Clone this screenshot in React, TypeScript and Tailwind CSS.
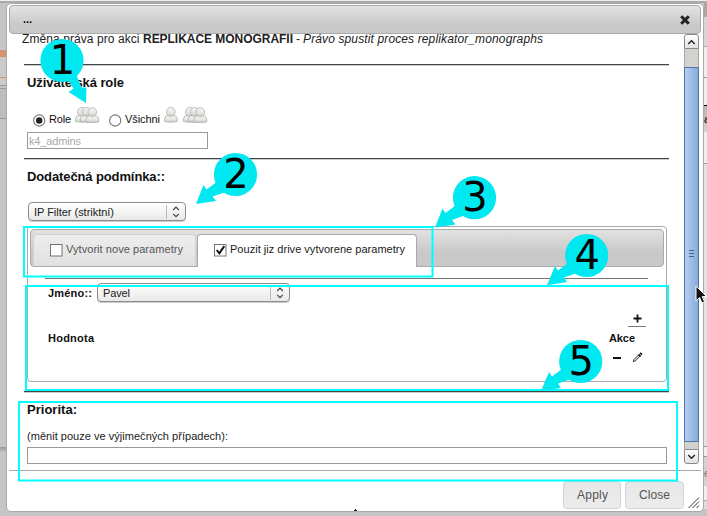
import React from "react";

function Strut({ h, c = "" }: { h: string; c?: string }) {
  return <div className={`${h} shrink-0 ${c}`} />;
}

function Rule() {
  return <div className="ml-[15px] h-[2px] w-[645px] shrink-0 border-t border-[#444] bg-[#ccc]" />;
}

function T({ w, children, className = "", size = 11, bold = false, italic = false }: any) {
  return (
    <svg width={w} height="16" className={`block shrink-0 overflow-visible ${className}`}>
      <text x="0" y="12" textLength={w} fill="currentColor" fontSize={size} fontWeight={bold ? 700 : 400} fontStyle={italic ? "italic" : "normal"}>
        {children}
      </text>
    </svg>
  );
}

function Person({ x, y = 0 }: { x: number; y?: number }) {
  return (
    <g transform={`translate(${x} ${y})`} stroke="#b0b0ac" strokeWidth="0.8">
      <path d="M.5 14.6 V11.5 Q.7 8.8 4.3 8.2 H9.3 Q12.8 8.8 13.2 11.5 V14.6 Q7 15.8 .5 14.6Z" fill="url(#person)" />
      <ellipse cx="6.8" cy="4.8" rx="4.3" ry="4.4" fill="url(#person)" />
    </g>
  );
}

function PersonShade() {
  return (
    <defs>
      <linearGradient id="person" x1="0" y1="0" x2="0" y2="1">
        <stop offset="0" stopColor="#f4f4f2" />
        <stop offset="0.6" stopColor="#e6e6e3" />
        <stop offset="1" stopColor="#c9c9c5" />
      </linearGradient>
    </defs>
  );
}

function Group({ className = "" }: { className?: string }) {
  return (
    <svg width="25" height="16" className={`shrink-0 ${className}`}>
      <PersonShade />
      <Person x={0} />
      <Person x={5} />
      <Person x={10.5} y={0.3} />
    </svg>
  );
}

function Radio({ checked = false }: { checked?: boolean }) {
  return (
    <svg width="13" height="13" className="shrink-0">
      <circle cx="6.2" cy="6.5" r="5.6" fill="#fff" stroke="#777" strokeWidth="1.1" />
      {checked && <circle cx="6.2" cy="6.5" r="3.2" fill="#222" />}
    </svg>
  );
}

function Check({ checked = false }: { checked?: boolean }) {
  return (
    <svg width="13" height="13" className="shrink-0">
      <rect x=".5" y=".5" width="11.5" height="11.5" fill="#fff" stroke="#77746e" />
      {checked && <path d="M2.8 6 L5.3 9.3 L10.3 2.2" fill="none" stroke="#111" strokeWidth="2" />}
    </svg>
  );
}

function Select({ label, width, tw }: { label: string; width: string; tw: number }) {
  return (
    <div className={`flex h-[19px] shrink-0 items-center rounded-[4px] border border-[#8e8c8a] bg-linear-to-b from-white to-[#e9e9e7] pl-[5px] text-[#1a1a1a] shadow-[0_1px_0_#ccc] ${width}`}>
      <T w={tw}>{label}</T>
      <div className="ml-auto h-[14px] w-px bg-[#bbb]" />
      <svg width="18" height="14" className="shrink-0">
        <path d="M6.2 5 L9 2.2 L11.8 5 M6.2 8.8 L9 11.6 L11.8 8.8" fill="none" stroke="#444" strokeWidth="1.2" />
      </svg>
    </div>
  );
}

function Backdrop({ side }: { side: "left" | "right" }) {
  if (side === "left")
    return (
      <div className="flex w-[6px] shrink-0 flex-col">
        <Strut h="h-[47px]" />
        <Strut h="h-[7px]" c="bg-[#d49470]" />
        <Strut h="h-[20px]" c="bg-[#cbcbcb]" />
        <Strut h="h-px" c="bg-[#d49470]" />
        <Strut h="h-[7px]" c="bg-[#cbcbcb]" />
        <Strut h="h-px" c="bg-[#999]" />
        <Strut h="h-[2px]" />
        <Strut h="h-[31px]" c="border-y border-[#999] bg-[#bdbdbd]" />
        <Strut h="h-[328px]" />
        <Strut h="h-[5px]" c="bg-linear-to-b from-[#999] to-[#c2c2c2]" />
      </div>
    );
  return (
    <div className="flex w-[3px] shrink-0 flex-col overflow-hidden text-[#333]">
      <Strut h="h-[13px]" c="bg-[#aaa6a3]" />
      <Strut h="h-[31px]" c="border-y border-[#aaa] bg-[#d6d6d6]" />
      <Strut h="h-[30px]" c="bg-[#eee]" />
      <Strut h="h-[28px]" c="border-t border-[#999] bg-[#eee]" />
      <div className="h-[27px] shrink-0 border-t border-black bg-linear-to-b from-[#b4b4b4] to-[#d4d4d4] pt-[5px]">
        <T w={6} bold>a</T>
      </div>
      <Strut h="h-[32px]" c="border-b border-[#999] bg-[#eee]" />
      <Strut h="h-[282px]" c="bg-[#e2e2e2]" />
      <Strut h="h-[11px]" c="border-y border-[#999] bg-[#eee]" />
      <div className="h-[29px] shrink-0 bg-[#d2d2d2] pt-[8px] text-[#777]">
        <T w={6}>e</T>
      </div>
      <Strut h="h-[15px]" c="border-b border-[#aaa] bg-[#eee]" />
      <Strut h="h-[8px]" c="bg-[#ddd]" />
    </div>
  );
}

function Scrollbar() {
  return (
    <div className="flex h-[431px] w-[15px] shrink-0 flex-col">
      <div className="flex h-[15px] items-center justify-center rounded-t-[3px] border border-[#8b8986] bg-linear-to-b from-white to-[#e2e2e0]">
        <svg width="9" height="6"><path d="M1.2 5 L4.5 1.7 L7.8 5" fill="none" stroke="#222" strokeWidth="1.4" /></svg>
      </div>
      <div className="h-[18px] border-x border-[#a9a7a4] bg-[#d4d2cf]" />
      <div className="flex h-[375px] flex-col items-center justify-center gap-[2px] border border-[#5376a8] bg-linear-to-r from-[#b5cff0] to-[#86aadb] pb-[2px]">
        <div className="h-px w-[5px] bg-[#44628f]" />
        <div className="h-px w-[5px] bg-[#44628f]" />
        <div className="h-px w-[5px] bg-[#44628f]" />
      </div>
      <div className="h-[7px] border-x border-[#a9a7a4] bg-[#d4d2cf]" />
      <div className="flex h-[15px] items-center justify-center rounded-b-[3px] border border-[#8b8986] bg-linear-to-b from-white to-[#e2e2e0]">
        <svg width="9" height="6"><path d="M1.2 1 L4.5 4.3 L7.8 1" fill="none" stroke="#222" strokeWidth="1.4" /></svg>
      </div>
    </div>
  );
}

function ParameterTabs() {
  return (
    <div className="ml-[18px] mt-[5px] flex h-[156px] w-[640px] shrink-0 flex-col rounded-[4px] border border-[#aaa] px-[2px] pt-[2px]">
      <div className="flex h-[38px] w-[634px] shrink-0 items-end rounded-[4px] border border-[#aaa] bg-linear-to-b from-[#e2e2e2] to-[#c9c9c9] to-60% pl-[2px]">
        <div className="flex h-[32px] w-[163px] items-center rounded-t-[4px] border border-b-0 border-[#d3d3d3] bg-linear-to-b from-[#eee] to-[#e0e0e0] pl-[16px] text-[#555]">
          <Check />
          <T w={117} className="-mt-[3px] ml-[3px]">Vytvorit nove parametry</T>
        </div>
        <div className="-mb-px ml-px flex h-[33px] w-[220px] items-center rounded-t-[4px] border border-b-0 border-[#aaa] bg-white pl-[16px] text-[#212121]">
          <div className="-mt-px"><Check checked /></div>
          <T w={175} className="-mt-[4px] ml-[3px]">Pouzit jiz drive vytvorene parametry</T>
        </div>
      </div>
      <div className="ml-[15px] mt-[11px] h-px w-[603px] shrink-0 bg-[#777]" />
      <div className="ml-[18px] mt-[4px] flex items-center">
        <T w={44} bold>Jméno::</T>
        <Select label="Pavel" width="ml-[5px] w-[193px]" tw={27} />
      </div>
      <div className="ml-[598px] mt-[10px] flex h-[15px] w-[18px] shrink-0 items-center justify-center border-b border-[#777] pb-[2px]">
        <svg width="9" height="9"><path d="M4.5 .5 V8.5 M.5 4.5 H8.5" stroke="#111" strokeWidth="1.8" /></svg>
      </div>
      <div className="ml-[18px] mt-[3px] flex w-[587px] shrink-0 justify-between">
        <T w={46} bold>Hodnota</T>
        <T w={26} bold>Akce</T>
      </div>
      <div className="ml-[583px] mt-[6px] flex items-center gap-[11px]">
        <div className="h-[2px] w-[8px] bg-[#111]" />
        <svg width="11" height="11"><path d="M1.3 9.6 L2 7.4 L6.4 3 L7.8 4.4 L3.4 8.9Z" fill="#ddd" stroke="#222" strokeWidth="0.9" /><path d="M6.6 2.4 L8.6 4.4 M8.2 .8 L10 2.6" stroke="#111" strokeWidth="1.6" /></svg>
      </div>
    </div>
  );
}

function Form() {
  return (
    <div className="flex h-[436px] w-[675px] flex-col overflow-hidden text-[#111]">
      <div className="-mt-[3px] ml-[13px] flex h-[16px] shrink-0 text-[#222]">
        <T w={117.5} size={12}>Změna práva pro akci</T>
        <T w={150} size={12} bold className="ml-[3.5px]">REPLIKACE MONOGRAFII</T>
        <T w={4} size={12} className="ml-[3px]">-</T>
        <T w={240} size={12} italic className="ml-[3px]">Právo spustit proces replikator_monographs</T>
      </div>
      <Strut h="h-[17px]" />
      <Rule />
      <T w={97} size={13} bold className="ml-[18px] mt-[9px]">Uživatelská role</T>
      <div className="ml-[24px] mt-[14px] flex h-[22px] shrink-0 items-start">
        <div className="mt-[9px]"><Radio checked /></div>
        <T w={22} className="ml-[3px] mt-[6px]">Role</T>
        <Group className="ml-[4px] mt-[2px]" />
        <div className="ml-[9px] mt-[9px]"><Radio /></div>
        <T w={35} className="ml-[3px] mt-[6px]">Všichni</T>
        <svg width="15" height="16" className="ml-[4px] mt-[2px]"><Person x={0} /></svg>
        <Group className="ml-[4px] mt-[2px]" />
      </div>
      <div className="ml-[18px] mt-[5px] flex h-[17px] w-[181px] shrink-0 items-center border border-[#999] pl-px text-[#aaa]">
        <T w={52}>k4_admins</T>
      </div>
      <Strut h="h-[9px]" />
      <Rule />
      <T w={138} size={13} bold className="ml-[18px] mt-[9px]">Dodatečná podmínka::</T>
      <Select label="IP Filter (striktní)" width="ml-[19px] mt-[17px] w-[158px]" tw={80} />
      <ParameterTabs />
      <Strut h="h-[9px]" />
      <Rule />
      <T w={50} size={13} bold className="ml-[18px] mt-[9px]">Priorita:</T>
      <T w={201} className="ml-[18px] mt-[10px] text-[#222]">(měnit pouze ve výjimečných případech):</T>
      <div className="ml-[18px] mt-[3px] h-[17px] w-[640px] shrink-0 border border-[#999]" />
    </div>
  );
}

function Callout({ n, x, y, tip, base }: { n: number; x: number; y: number; tip: string; base: string }) {
  return (
    <g>
      <path d={`${tip} ${base}Z`} fill="#00e8f0" />
      <circle cx={x} cy={y} r="21.6" fill="#00e8f0" />
      <text x={x + 0.5} y={y + 13.2} textAnchor="middle" fontSize="40" fill="#000" fontFamily="DejaVu Sans, sans-serif">{n}</text>
    </g>
  );
}

function Annotations() {
  return (
    <svg width="707" height="516" className="pointer-events-none absolute left-0 top-0">
      <g fill="none" stroke="#0ff" strokeWidth="2">
        <rect x="24" y="227" width="408.5" height="49.5" />
        <rect x="26" y="286" width="642" height="104" />
        <rect x="19" y="402" width="658" height="78.5" />
      </g>
      <Callout n={1} x={62} y={60.5} tip="M86 103" base="L68.5 92 L73.5 88.5 L66 77 L76 74 L81.5 87.5 L86.5 87.5" />
      <Callout n={2} x={235.5} y={174.5} tip="M196 204" base="L203.5 185 L206.5 189.5 L221 179 L229 191 L212.5 196.5 L216 201" />
      <Callout n={3} x={474.5} y={197.7} tip="M435 227.5" base="L442.5 208.5 L445.5 213 L460 202 L468 214 L452 220 L455.5 224.5" />
      <Callout n={4} x={586.7} y={255.5} tip="M547 285.3" base="L555 266 L558 270.5 L572 260 L580 272 L564 277.5 L567 282" />
      <Callout n={5} x={580.7} y={361.5} tip="M541 391" base="L549 372 L552 376.5 L566 366 L574 378 L558 383.5 L561 388" />
      <path d="M696 286 V300.8 L699.6 297.6 L702 303 L704.6 301.8 L702.2 296.6 H706.6Z" fill="#111" stroke="#fff" strokeWidth="1" />
      <path d="M354 510.5 H357 M355.5 509 V511" stroke="#222" strokeWidth="1" />
    </svg>
  );
}

export default function App() {
  return (
    <div className="relative flex h-[516px] w-[707px] flex-col overflow-hidden bg-[#c5c5c5] font-['Liberation_Sans',Arial,sans-serif]">
      <div className="h-[3px] shrink-0 border-t border-[#eee] bg-[#aaa]" />
      <div className="flex">
        <Backdrop side="left" />
        <div className="flex h-[509px] w-[698px] shrink-0 flex-col rounded-[5px] border border-[#aaa] bg-white pl-[2px] pt-px">
          <div className="flex h-[29px] w-[692px] shrink-0 items-center justify-between rounded-[4px] border border-[#aaa] bg-linear-to-b from-[#e3e3e3] to-[#c9c9c9] to-70% pl-[13px] pr-[10px]">
            <T w={9} bold className="-mt-px">...</T>
            <svg width="10" height="10"><path d="M1.2 1.2 L8.8 8.8 M8.8 1.2 L1.2 8.8" stroke="#222" strokeWidth="3" /></svg>
          </div>
          <div className="flex h-[436px] shrink-0">
            <Form />
            <Scrollbar />
          </div>
          <div className="h-px w-[692px] shrink-0 bg-[#aaa]" />
          <div className="flex shrink-0 pl-[554px] pt-[10px] text-[#555]">
            <div className="flex h-[28px] w-[58px] items-center justify-center rounded-[4px] border border-[#d3d3d3] bg-linear-to-b from-[#e7e7e7] to-[#ececec]">
              <T w={31} size={12}>Apply</T>
            </div>
            <div className="ml-[4px] flex h-[28px] w-[59px] items-center justify-center rounded-[4px] border border-[#d3d3d3] bg-linear-to-b from-[#e7e7e7] to-[#ececec]">
              <T w={31} size={12}>Close</T>
            </div>
            <svg width="12" height="12" className="ml-[4px] mt-[16px]"><path d="M.5 11 L11 .5 M4.5 11 L11 4.5 M8.5 11 L11 8.5" stroke="#333" strokeWidth="1" /></svg>
          </div>
        </div>
        <Backdrop side="right" />
      </div>
      <Annotations />
    </div>
  );
}
